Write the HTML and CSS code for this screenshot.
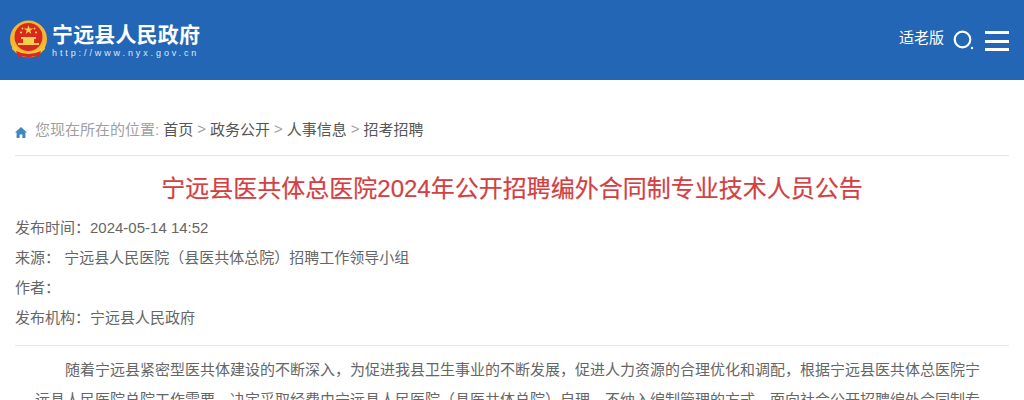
FILE: index.html
```html
<!DOCTYPE html>
<html lang="zh-CN">
  <head>
    <meta charset="UTF-8" />
    <meta name="viewport" content="width=device-width, initial-scale=1.0" />
    <title>宁远县医共体总医院2024年公开招聘编外合同制专业技术人员公告</title>
    <link rel="stylesheet" href="styles.css">
  </head>
  <body>
    <header class="topBar">
      <a class="logo" href="#">
        <svg class="emblem" width="38" height="40" viewBox="0 0 38 40">
          <circle cx="18.5" cy="19" r="18.5" fill="#f2b632" />
          <circle cx="18.5" cy="17" r="14" fill="#d8281f" />
          <polygon points="18.5,5 19.6,8.4 23.2,8.4 20.3,10.5 21.4,13.9 18.5,11.8 15.6,13.9 16.7,10.5 13.8,8.4 17.4,8.4" fill="#f7d04a" />
          <circle cx="11" cy="12.5" r="1.1" fill="#f7d04a" />
          <circle cx="26" cy="12.5" r="1.1" fill="#f7d04a" />
          <circle cx="12.5" cy="8.5" r="0.9" fill="#f7d04a" />
          <circle cx="24.5" cy="8.5" r="0.9" fill="#f7d04a" />
          <rect x="11" y="17" width="15" height="2" fill="#f7d04a" />
          <rect x="13" y="19" width="11" height="4" fill="#f7d04a" />
          <rect x="8" y="23" width="21" height="2" fill="#f7d04a" />
          <path d="M3 24 Q8 32 18.5 32 Q29 32 34 24 L35 29 Q28 37 18.5 37 Q9 37 2 29 Z" fill="#f5c23e" />
          <path d="M6 31 Q12 34 18.5 34 Q25 34 31 31 L29 37 Q24 35 18.5 38 Q13 35 8 37 Z" fill="#d8281f" />
        </svg>
        <span class="logoText">
          <strong>宁远县人民政府</strong>
          <small>http://www.nyx.gov.cn</small>
        </span>
      </a>
      <div class="tools">
        <a class="oldMode" href="#">适老版</a>
        <svg class="searchIcon" width="22" height="22" viewBox="0 0 22 22">
          <circle cx="9.5" cy="9.5" r="7.8" fill="none" stroke="#fff" stroke-width="2.2" />
          <circle cx="19" cy="18" r="1.2" fill="#fff" />
        </svg>
        <div class="menuIcon"><i></i><i></i><i></i></div>
      </div>
    </header>

    <main class="content">
      <nav class="crumbs">
        <svg class="homeIcon" width="12" height="11" viewBox="0 0 12 11">
          <path d="M6 0 L12 5.6 L10.4 5.6 L10.4 11 L7.4 11 L7.4 7.4 L4.6 7.4 L4.6 11 L1.6 11 L1.6 5.6 L0 5.6 Z" fill="#3f87bd" />
        </svg>
        <span class="here">您现在所在的位置:</span>
        <a href="#">首页</a><span class="sep">&gt;</span>
        <a href="#">政务公开</a><span class="sep">&gt;</span>
        <a href="#">人事信息</a><span class="sep">&gt;</span>
        <a href="#">招考招聘</a>
      </nav>

      <h1 class="title">宁远县医共体总医院2024年公开招聘编外合同制专业技术人员公告</h1>

      <ul class="meta">
        <li>发布时间：2024-05-14 14:52</li>
        <li>来源：&nbsp;宁远县人民医院（县医共体总院）招聘工作领导小组</li>
        <li>作者：</li>
        <li>发布机构：宁远县人民政府</li>
      </ul>

      <div class="article">
        <p>随着宁远县紧密型医共体建设的不断深入，为促进我县卫生事业的不断发展，促进人力资源的合理优化和调配，根据宁远县医共体总医院宁远县人民医院总院工作需要，决定采取经费由宁远县人民医院（县医共体总院）自理、不纳入编制管理的方式，面向社会公开招聘编外合同制专业技术人员。</p>
      </div>
    </main>
  </body>
</html>
```

FILE: styles.css
```css
* {
  margin: 0;
  padding: 0;
  box-sizing: border-box;
}

html,
body {
  height: 400px;
  overflow: hidden;
}

body {
  font-family: "Liberation Sans", "Noto Sans CJK SC", sans-serif;
  color: #666;
  background: #fff;
}

a {
  color: inherit;
  text-decoration: none;
}

.topBar {
  display: flex;
  justify-content: space-between;
  height: 80px;
  padding: 20px 15px 0 10px;
  background: #2266b5;
  color: #fff;
}

.logo {
  display: flex;
  gap: 4px;
  align-items: flex-start;
}

.logoText strong {
  display: block;
  margin-top: 1px;
  font-size: 21px;
  line-height: 27px;
  letter-spacing: 0.15px;
  white-space: nowrap;
}

.logoText small {
  display: block;
  font-size: 9px;
  line-height: 10px;
  letter-spacing: 2.9px;
  opacity: 0.85;
}

.tools {
  display: flex;
  align-items: flex-start;
}

.oldMode {
  margin: 1px 9px 0 0;
  font-size: 15px;
  line-height: 34px;
}

.searchIcon {
  margin: 10px 10px 0 0;
}

.menuIcon {
  display: flex;
  flex-direction: column;
  justify-content: space-between;
  width: 24px;
  height: 20px;
  margin-top: 11px;
}

.menuIcon i {
  display: block;
  height: 3px;
  background: #fff;
}

.content {
  padding: 0 15px;
}

.crumbs {
  display: flex;
  align-items: center;
  height: 76px;
  padding-top: 22px;
  border-bottom: 1px solid #e5e5e5;
  font-size: 15px;
  color: #555;
}

.homeIcon {
  margin: 8px 8px 0 0;
}

.here {
  color: #a0a0a0;
  margin-right: 4px;
}

.sep {
  color: #a0a0a0;
  margin: 0 4px;
}

.title {
  margin-top: 17px;
  font-size: 24px;
  line-height: 32px;
  font-weight: normal;
  text-align: center;
  color: #d33f42;
  -webkit-text-stroke: 0.2px #d33f42;
}

.meta {
  list-style: none;
  margin-top: 8px;
  padding-bottom: 12px;
  border-bottom: 1px solid #e8e8e8;
  font-size: 15px;
  line-height: 30px;
}

.article {
  padding: 9px 20px 0;
  font-size: 15px;
  line-height: 30px;
}

.article p {
  text-indent: 2em;
}
```
